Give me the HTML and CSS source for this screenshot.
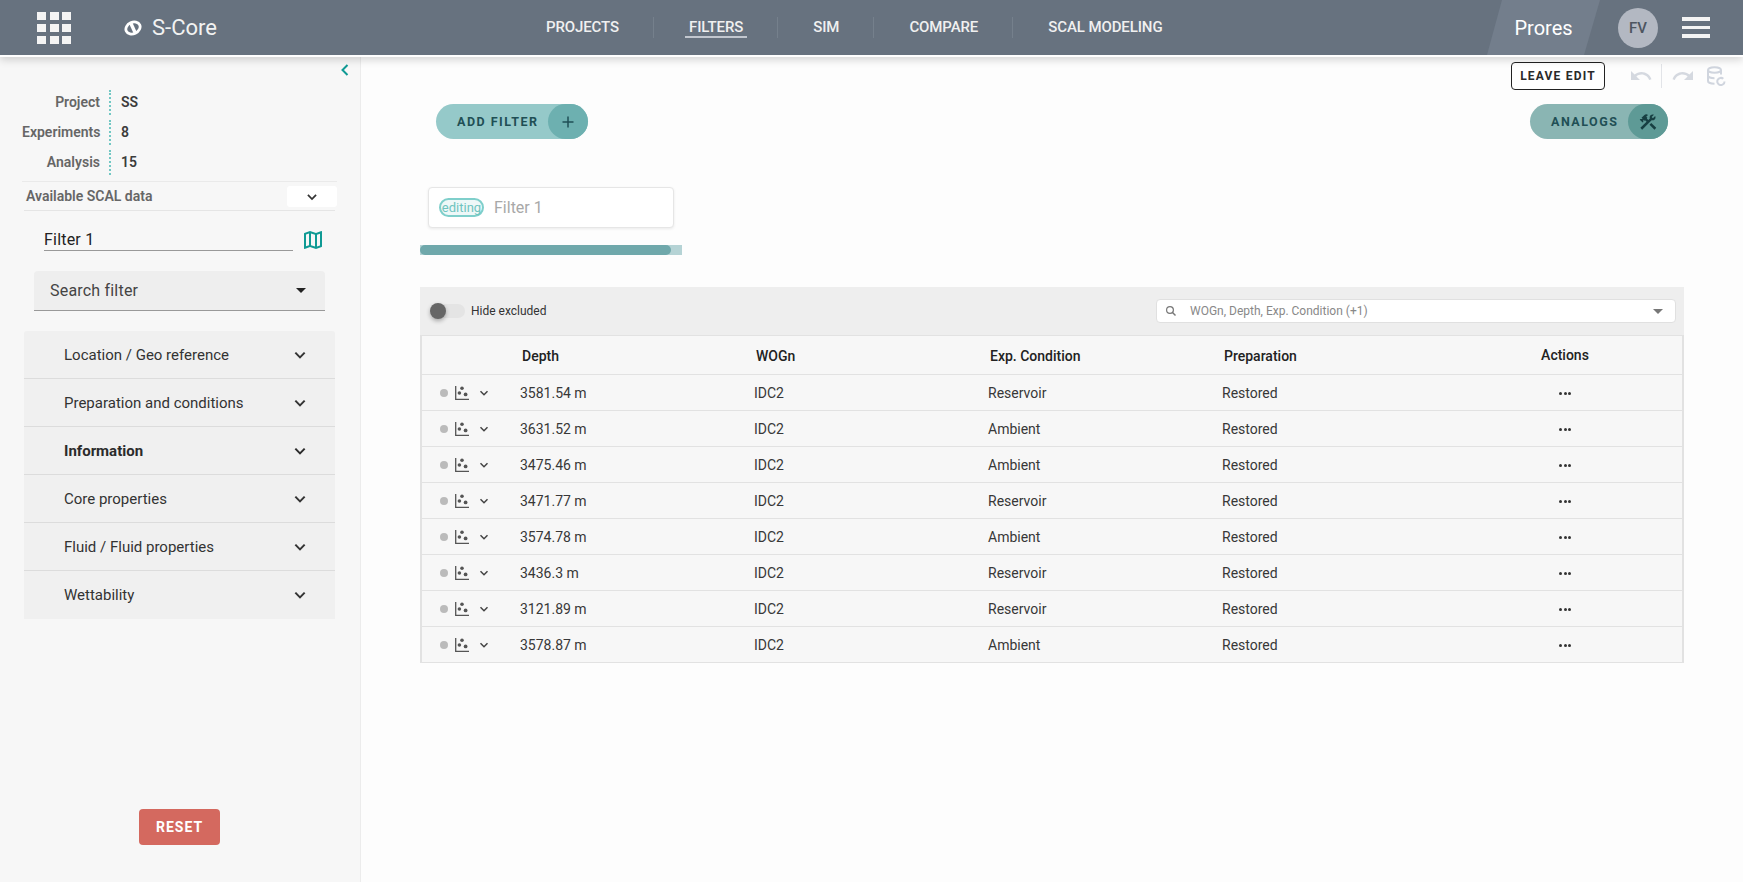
FILE: index.html
```html
<!DOCTYPE html>
<html lang="en">
<head>
  <meta charset="UTF-8">
  <title>S-Core Filters</title>
  <link rel="stylesheet" href="styles.css">
</head>
<body>
  <svg class="defs" width="0" height="0">
    <symbol id="chev" viewBox="0 0 24 24"><path d="M5 8.5l7 7 7-7" fill="none" stroke="currentColor" stroke-width="3"/></symbol>
    <symbol id="scatter" viewBox="0 0 14 14"><path d="M.7 0v13.3H14" fill="none" stroke="currentColor" stroke-width="1.3"/><circle cx="7" cy="2.2" r="1.8" fill="currentColor"/><circle cx="4.4" cy="7" r="1.8" fill="currentColor"/><circle cx="10.6" cy="8.4" r="1.9" fill="currentColor"/></symbol>
  </svg>

  <header class="topbar">
    <div class="apps">
      <i></i><i></i><i></i><i></i><i></i><i></i><i></i><i></i><i></i>
    </div>
    <div class="brand">
      <svg class="brand-logo" viewBox="0 0 18 16"><ellipse cx="9" cy="8" rx="7.4" ry="5.7" fill="none" stroke="#fff" stroke-width="2.8" transform="rotate(-25 9 8)"/><path d="M6.5 2.5L11.5 13.5" stroke="#fff" stroke-width="3.4"/></svg>
      <span>S-Core</span>
    </div>
    <nav class="nav">
      <a href="#">PROJECTS</a>
      <a href="#" class="active">FILTERS</a>
      <a href="#">SIM</a>
      <a href="#">COMPARE</a>
      <a href="#">SCAL MODELING</a>
    </nav>
    <div class="product">Prores</div>
    <div class="avatar">FV</div>
    <div class="burger"><i></i><i></i><i></i></div>
  </header>

  <div class="main">
    <aside class="sidebar">
      <div class="collapse">
        <svg width="14" height="14" viewBox="0 0 14 14"><path d="M9.5 2L4.5 7l5 5" fill="none" stroke="#0f9a94" stroke-width="2"/></svg>
      </div>
      <dl class="info">
        <div class="info-row"><dt>Project</dt><dd>SS</dd></div>
        <div class="info-row"><dt>Experiments</dt><dd>8</dd></div>
        <div class="info-row"><dt>Analysis</dt><dd>15</dd></div>
      </dl>
      <div class="scal">
        <span>Available SCAL data</span>
        <div class="scal-select"><svg width="14" height="14"><use href="#chev"/></svg></div>
      </div>
      <div class="filter-name">
        <div class="filter-input">Filter 1</div>
        <svg class="map-icon" viewBox="0 0 24 24"><path d="M20.5 3l-.16.03L15 5.1 9 3 3.36 4.9c-.21.07-.36.25-.36.48V20.5c0 .28.22.5.5.5l.16-.03L9 18.9l6 2.1 5.64-1.9c.21-.07.36-.25.36-.48V3.5c0-.28-.22-.5-.5-.5zM10 5.47l4 1.4v11.66l-4-1.4V5.47zm-5 .99l3-1.01v11.7l-3 1.16V6.46zm14 11.08l-3 1.01V6.86l3-1.16v11.84z"/></svg>
      </div>
      <div class="search-filter">
        <span>Search filter</span>
        <b class="caret"></b>
      </div>
      <div class="accordion">
        <div class="acc-row"><span>Location / Geo reference</span><svg width="16" height="16"><use href="#chev"/></svg></div>
        <div class="acc-row"><span>Preparation and conditions</span><svg width="16" height="16"><use href="#chev"/></svg></div>
        <div class="acc-row bold"><span>Information</span><svg width="16" height="16"><use href="#chev"/></svg></div>
        <div class="acc-row"><span>Core properties</span><svg width="16" height="16"><use href="#chev"/></svg></div>
        <div class="acc-row"><span>Fluid / Fluid properties</span><svg width="16" height="16"><use href="#chev"/></svg></div>
        <div class="acc-row"><span>Wettability</span><svg width="16" height="16"><use href="#chev"/></svg></div>
      </div>
      <button class="reset">RESET</button>
    </aside>

    <section class="content">
      <div class="edit-bar">
        <button class="leave-edit">LEAVE EDIT</button>
        <svg class="hist undo" viewBox="0 0 24 24"><path d="M12.5 8c-2.65 0-5.05.99-6.9 2.6L2 7v9h9l-3.62-3.62c1.39-1.16 3.16-1.88 5.12-1.88 3.54 0 6.55 2.31 7.6 5.5l2.37-.78C21.08 11.03 17.15 8 12.5 8z"/></svg>
        <span class="hist-sep"></span>
        <svg class="hist" viewBox="0 0 24 24"><path d="M18.4 10.6C16.55 8.99 14.15 8 11.5 8c-4.65 0-8.58 3.03-9.96 7.22L3.9 16c1.05-3.19 4.05-5.5 7.6-5.5 1.95 0 3.73.72 5.12 1.88L13 16h9V7l-3.6 3.6z"/></svg>
        <svg class="db" viewBox="0 0 20 20"><g fill="none" stroke="#d0d5de" stroke-width="2"><ellipse cx="8.5" cy="4" rx="6.5" ry="2.8"/><path d="M2 4v11c0 1.6 3 2.8 6.5 2.8M15 4v4.5M2 9.5c0 1.6 3 2.8 6.5 2.8"/><path d="M18.5 15.5a3.6 3.6 0 1 1-1.2-2.7"/></g></svg>
      </div>

      <div class="pill-row">
        <div class="pill add-filter">
          <span>ADD FILTER</span>
          <div class="pill-icon">
            <svg width="14" height="14" viewBox="0 0 14 14"><path d="M7 1.5v11M1.5 7h11" stroke="#1f4f55" stroke-width="1.5"/></svg>
          </div>
        </div>
        <div class="pill analogs">
          <span>ANALOGS</span>
          <div class="pill-icon">
            <svg width="20" height="20" viewBox="0 0 24 24" fill="#173f42"><path d="M13.783 15.172l2.121-2.121 5.996 5.996-2.121 2.121zM17.5 10c1.93 0 3.5-1.57 3.5-3.5 0-.58-.16-1.12-.41-1.6l-2.7 2.7-1.49-1.49 2.7-2.7c-.48-.25-1.02-.41-1.6-.41C15.57 3 14 4.57 14 6.5c0 .41.08.8.21 1.16l-1.85 1.85-1.78-1.78.71-.71-1.41-1.41L12 3.49c-1.17-1.17-3.07-1.17-4.24 0L4.22 7.03l1.41 1.41H2.81l-.71.71 3.54 3.54.71-.71V9.15l1.41 1.41.71-.71 1.78 1.78-7.41 7.41 2.12 2.12L16.34 9.79c.36.13.75.21 1.16.21z"/></svg>
          </div>
        </div>
      </div>

      <div class="filter-card">
        <span class="editing">editing</span>
        <span class="filter-title">Filter 1</span>
      </div>
      <div class="progress"><div class="progress-bar"></div></div>

      <div class="table-wrap">
        <div class="table-tools">
          <div class="toggle"><i class="knob"></i></div>
          <span class="toggle-label">Hide excluded</span>
          <div class="col-select">
            <svg width="12" height="12" viewBox="0 0 12 12"><circle cx="5" cy="5" r="3.4" fill="none" stroke="#777" stroke-width="1.2"/><path d="M7.5 7.5l3 3" stroke="#777" stroke-width="1.4"/></svg>
            <span>WOGn, Depth, Exp. Condition (+1)</span>
            <b class="caret grey"></b>
          </div>
        </div>
        <table class="grid">
          <thead>
            <tr><th></th><th>Depth</th><th>WOGn</th><th>Exp. Condition</th><th>Preparation</th><th class="actions">Actions</th></tr>
          </thead>
          <tbody>
            <tr><td class="ctl"><i class="dot"></i><svg class="scatter"><use href="#scatter"/></svg><svg class="mini"><use href="#chev"/></svg></td><td>3581.54 m</td><td>IDC2</td><td>Reservoir</td><td>Restored</td><td class="actions"><span class="more"><i></i><i></i><i></i></span></td></tr>
            <tr><td class="ctl"><i class="dot"></i><svg class="scatter"><use href="#scatter"/></svg><svg class="mini"><use href="#chev"/></svg></td><td>3631.52 m</td><td>IDC2</td><td>Ambient</td><td>Restored</td><td class="actions"><span class="more"><i></i><i></i><i></i></span></td></tr>
            <tr><td class="ctl"><i class="dot"></i><svg class="scatter"><use href="#scatter"/></svg><svg class="mini"><use href="#chev"/></svg></td><td>3475.46 m</td><td>IDC2</td><td>Ambient</td><td>Restored</td><td class="actions"><span class="more"><i></i><i></i><i></i></span></td></tr>
            <tr><td class="ctl"><i class="dot"></i><svg class="scatter"><use href="#scatter"/></svg><svg class="mini"><use href="#chev"/></svg></td><td>3471.77 m</td><td>IDC2</td><td>Reservoir</td><td>Restored</td><td class="actions"><span class="more"><i></i><i></i><i></i></span></td></tr>
            <tr><td class="ctl"><i class="dot"></i><svg class="scatter"><use href="#scatter"/></svg><svg class="mini"><use href="#chev"/></svg></td><td>3574.78 m</td><td>IDC2</td><td>Ambient</td><td>Restored</td><td class="actions"><span class="more"><i></i><i></i><i></i></span></td></tr>
            <tr><td class="ctl"><i class="dot"></i><svg class="scatter"><use href="#scatter"/></svg><svg class="mini"><use href="#chev"/></svg></td><td>3436.3 m</td><td>IDC2</td><td>Reservoir</td><td>Restored</td><td class="actions"><span class="more"><i></i><i></i><i></i></span></td></tr>
            <tr><td class="ctl"><i class="dot"></i><svg class="scatter"><use href="#scatter"/></svg><svg class="mini"><use href="#chev"/></svg></td><td>3121.89 m</td><td>IDC2</td><td>Reservoir</td><td>Restored</td><td class="actions"><span class="more"><i></i><i></i><i></i></span></td></tr>
            <tr><td class="ctl"><i class="dot"></i><svg class="scatter"><use href="#scatter"/></svg><svg class="mini"><use href="#chev"/></svg></td><td>3578.87 m</td><td>IDC2</td><td>Ambient</td><td>Restored</td><td class="actions"><span class="more"><i></i><i></i><i></i></span></td></tr>
          </tbody>
        </table>
      </div>
    </section>
  </div>
</body>
</html>
```

FILE: styles.css
```css
* {
  box-sizing: border-box;
}
html, body {
  height: 100%;
}
body {
  margin: 0;
  font-family: Roboto, "Liberation Sans", sans-serif;
  color: #333;
  background: #fdfdfd;
  overflow: hidden;
}
.defs {
  position: absolute;
}

/* top bar */
.topbar {
  position: relative;
  z-index: 2;
  display: flex;
  align-items: center;
  height: 57px;
  background: #67727f;
  border-bottom: 2px solid #fff;
  box-shadow: 0 3px 8px rgba(0, 0, 0, 0.16);
}
.apps {
  display: grid;
  grid-template-columns: repeat(3, 9px);
  grid-auto-rows: 8px;
  gap: 4px 3.5px;
  margin-left: 37px;
}
.apps i {
  background: #f4f4f4;
}
.brand {
  display: flex;
  align-items: center;
  margin-left: 53px;
  color: #f2f2f2;
  font-size: 22px;
}
.brand-logo {
  width: 18px;
  height: 16px;
  margin-right: 10px;
}
.nav {
  display: flex;
  margin-left: 294px;
}
.nav a {
  position: relative;
  height: 21px;
  padding: 0 34px 0 35px;
  line-height: 21px;
  font-size: 15px;
  font-weight: 500;
  color: #f0f0f0;
  text-decoration: none;
  letter-spacing: -0.1px;
  border-right: 1px solid #75808c;
}
.nav a:last-child {
  border-right: none;
}
.nav a.active::after {
  content: "";
  position: absolute;
  left: 31px;
  right: 30px;
  bottom: 0;
  height: 2px;
  background: #c2c7cf;
}
.product {
  display: flex;
  align-items: center;
  justify-content: center;
  width: 113px;
  height: 55px;
  margin-left: auto;
  font-size: 20px;
  color: #fff;
  background: #737e8c;
  clip-path: polygon(15px 0, 100% 0, 97px 100%, 0 100%);
}
.avatar {
  display: flex;
  align-items: center;
  justify-content: center;
  width: 40px;
  height: 40px;
  margin-left: 18px;
  border-radius: 50%;
  background: #b3b8c2;
  color: #4d5560;
  font-size: 15px;
  font-weight: 500;
}
.burger {
  display: flex;
  flex-direction: column;
  gap: 5px;
  margin: 0 33px 0 24px;
}
.burger i {
  display: block;
  width: 28px;
  height: 3.5px;
  background: #f4f4f4;
}

/* sidebar */
.main {
  display: flex;
  height: calc(100% - 57px);
}
.sidebar {
  display: flex;
  flex-direction: column;
  width: 361px;
  flex: none;
  background: #f7f7f7;
  border-right: 1px solid #ececec;
}
.collapse {
  display: flex;
  justify-content: flex-end;
  height: 30px;
  padding: 6px 8px 0 0;
}
.info {
  margin: 0 0 0 22px;
  width: 315px;
  height: 95px;
  padding-bottom: 6px;
  border-bottom: 1px solid #eaeaea;
}
.info-row {
  display: flex;
  align-items: center;
  height: 30px;
  font-size: 14px;
  font-weight: 600;
}
.info-row dt {
  width: 78px;
  height: 25px;
  line-height: 25px;
  text-align: right;
  color: #666;
  white-space: nowrap;
}
.info-row dd {
  height: 25px;
  margin-left: 9px;
  padding-left: 10px;
  line-height: 25px;
  color: #3c3c3c;
  border-left: 2px dotted #72c8c4;
}
.scal {
  display: flex;
  align-items: flex-start;
  justify-content: space-between;
  height: 29px;
  margin: 0 25px 0 24px;
  padding: 4px 0 0 2px;
  border-bottom: 1px solid #e5e5e5;
  font-size: 14px;
  font-weight: 600;
  color: #666;
}
.scal span {
  margin-top: 2px;
}
.scal-select {
  display: flex;
  align-items: center;
  justify-content: center;
  width: 50px;
  height: 21px;
  margin-right: -2px;
  background: #fff;
  border-radius: 3px;
  color: #333;
}
.filter-name {
  display: flex;
  align-items: center;
  margin: 17px 0 0 44px;
}
.filter-input {
  width: 249px;
  height: 22px;
  font-size: 16px;
  line-height: 21px;
  letter-spacing: 0.2px;
  color: #222;
  border-bottom: 1px solid #999;
}
.map-icon {
  width: 24px;
  height: 24px;
  margin-left: 8px;
  fill: #0f9a94;
}
.search-filter {
  display: flex;
  align-items: center;
  justify-content: space-between;
  height: 40px;
  margin: 19px 35px 0 34px;
  padding: 0 19px 0 16px;
  font-size: 16px;
  letter-spacing: 0.2px;
  color: #444;
  background: #eeeeee;
  border-bottom: 1px solid #999;
  border-radius: 4px 4px 0 0;
}
.caret {
  width: 0;
  height: 0;
  border-left: 5px solid transparent;
  border-right: 5px solid transparent;
  border-top: 5px solid #222;
}
.caret.grey {
  margin-left: auto;
  border-top-color: #777;
}
.accordion {
  margin: 20px 25px 0 24px;
  background: #f0f0f0;
  border-radius: 3px 3px 0 0;
}
.acc-row {
  display: flex;
  align-items: center;
  justify-content: space-between;
  height: 48px;
  padding: 0 27px 0 40px;
  font-size: 15px;
  color: #333;
  border-bottom: 1px solid #dcdcdc;
}
.acc-row:last-child {
  border-bottom: none;
}
.acc-row.bold {
  font-weight: 700;
  color: #2b2b2b;
}
.reset {
  align-self: flex-start;
  width: 81px;
  height: 36px;
  margin: auto 0 37px 139px;
  border: none;
  border-radius: 4px;
  background: #d4695f;
  color: #fff;
  font-family: inherit;
  font-size: 14px;
  font-weight: 700;
  letter-spacing: 1px;
}

/* main content */
.content {
  flex: 1;
  min-width: 0;
}
.edit-bar {
  display: flex;
  align-items: center;
  height: 28px;
  margin-top: 5px;
}
.leave-edit {
  width: 94px;
  height: 28px;
  margin-left: 1150px;
  padding: 0;
  background: #fff;
  border: 1px solid #222;
  border-radius: 4px;
  font-family: inherit;
  font-size: 12px;
  font-weight: 700;
  letter-spacing: 1.2px;
  color: #2a2a2a;
}
.hist {
  width: 24px;
  height: 24px;
  fill: #d5d9e0;
}
.undo {
  margin-left: 24px;
}
.hist-sep {
  width: 1px;
  height: 24px;
  margin: 0 9px 0 8px;
  background: #e2e4e8;
}
.db {
  width: 20px;
  height: 20px;
  margin-left: 11px;
}
.pill-row {
  display: flex;
  justify-content: space-between;
  margin: 14px 75px 0 75px;
}
.pill {
  display: flex;
  align-items: center;
  height: 35px;
  border-radius: 18px;
  font-size: 12.5px;
  font-weight: 700;
  letter-spacing: 1.5px;
  color: #1f4f55;
}
.pill-icon {
  display: flex;
  align-items: center;
  justify-content: center;
  width: 40px;
  height: 35px;
  margin-left: auto;
  border-radius: 18px;
}
.add-filter {
  width: 152px;
  padding-left: 21px;
  background: #95c9c9;
}
.add-filter .pill-icon {
  background: #6db0b0;
}
.analogs {
  width: 138px;
  padding-left: 21px;
  background: #8ab5b3;
}
.analogs .pill-icon {
  background: #5e9a96;
}
.filter-card {
  display: flex;
  align-items: center;
  width: 246px;
  height: 41px;
  margin: 48px 0 0 67px;
  padding-left: 10px;
  background: #fff;
  border: 1px solid #e6e6e6;
  border-radius: 4px;
  box-shadow: 0 1px 3px rgba(0, 0, 0, 0.08);
}
.editing {
  width: 45px;
  height: 19px;
  border: 2px solid #7fcfcb;
  border-radius: 10px;
  background: #eef8f8;
  font-size: 13px;
  line-height: 15px;
  text-align: center;
  color: #6fc4bf;
}
.filter-title {
  margin-left: 10px;
  font-size: 16px;
  color: #a8a8a8;
}
.progress {
  width: 262px;
  height: 10px;
  margin: 17px 0 0 59px;
  background: #b5d3d5;
}
.progress-bar {
  width: 251px;
  height: 10px;
  background: #6fa8ab;
  border-radius: 5px;
}
.table-wrap {
  width: 1264px;
  margin: 32px 0 0 59px;
}
.table-tools {
  display: flex;
  align-items: center;
  height: 48px;
  padding: 0 8px 0 10px;
  background: #eeeeee;
}
.toggle {
  position: relative;
  width: 33px;
  height: 14px;
  margin-left: 2px;
  background: #e4e4e4;
  border-radius: 7px;
}
.knob {
  position: absolute;
  left: -2px;
  top: -1px;
  width: 16px;
  height: 16px;
  border-radius: 50%;
  background: #666;
  box-shadow: 0 2px 4px rgba(0, 0, 0, 0.3);
}
.toggle-label {
  margin-left: 6px;
  font-size: 12px;
  color: #333;
}
.col-select {
  display: flex;
  align-items: center;
  width: 520px;
  height: 24px;
  margin-left: auto;
  padding: 0 12px 0 8px;
  background: #fff;
  border: 1px solid #e0e0e0;
  border-radius: 4px;
  font-size: 12px;
  color: #888;
}
.col-select span {
  margin-left: 13px;
}
.grid {
  width: 1264px;
  border-collapse: collapse;
  table-layout: fixed;
  background: #f7f7f7;
  border-left: 2px solid #e2e2e2;
  border-right: 2px solid #e2e2e2;
}
.grid th,
.grid td {
  padding: 0;
  text-align: left;
  font-size: 14px;
  border: 1px solid #e2e2e2;
  border-left: none;
  border-right: none;
}
.grid th {
  height: 39px;
  padding: 2px 0 0 2px;
  font-weight: 500;
  color: #222;
}
.grid td {
  height: 36px;
  color: #383838;
}
.grid th:first-child,
.grid td:first-child {
  width: 99px;
}
.grid th:nth-child(2),
.grid th:nth-child(3),
.grid th:nth-child(4),
.grid th:nth-child(5) {
  width: 234px;
}
.grid .actions {
  padding: 0 8px 0 0;
  text-align: center;
}
.ctl {
  font-size: 0 !important;
}
.dot {
  display: inline-block;
  width: 8px;
  height: 8px;
  margin-left: 18px;
  border-radius: 50%;
  background: #bbb;
  vertical-align: middle;
}
.scatter {
  width: 14px;
  height: 14px;
  margin-left: 7px;
  color: #555;
  vertical-align: middle;
}
.mini {
  width: 12px;
  height: 12px;
  margin-left: 9px;
  color: #444;
  vertical-align: middle;
}
.more {
  display: inline-flex;
  gap: 1.5px;
  vertical-align: middle;
}
.more i {
  width: 3px;
  height: 3px;
  border-radius: 50%;
  background: #333;
}
```
